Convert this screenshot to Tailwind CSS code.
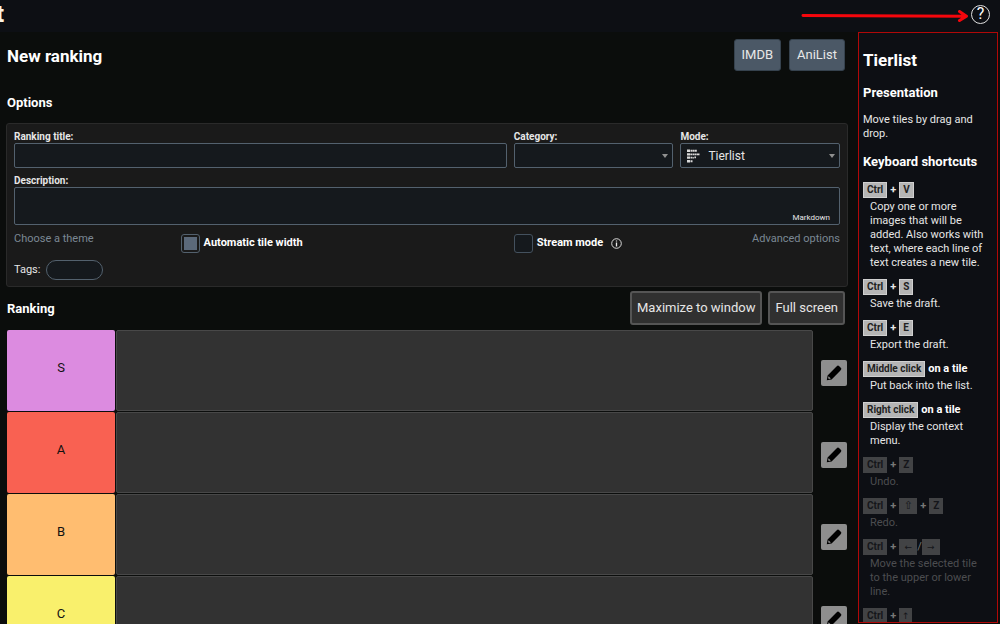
<!DOCTYPE html>
<html lang="en">
<head>
<meta charset="utf-8">
<meta name="viewport" content="width=device-width, initial-scale=1">
<title>New ranking</title>
<script src="https://cdn.jsdelivr.net/npm/@tailwindcss/browser@4"></script>
</head>
<body class="flex h-screen flex-col overflow-hidden bg-[#0b0d0c] font-[Roboto,sans-serif] text-[11px] leading-[14px] text-[#e6e6e6]">
<svg class="hidden">
  <symbol id="pencil" viewBox="0 0 16 16"><path d="M.8 15.200 L1.600 10.400 L10 2 L11.300 .8 Q12.200 .2 13 1 L15 3 Q15.700 3.800 15 4.700 L14 6 L5.600 14.400 Z"/><path d="M2.600 11.200 L4.800 13.400 L2.900 13.900 L2.100 13.100 Z" fill="#8e8e8e"/></symbol>
</svg>

<header class="flex h-8 shrink-0 items-center justify-between bg-[#0d0f14] pr-[10px]">
  <a href="#" class="-ml-1 flex h-full items-center pb-1 text-[24px] font-bold leading-7 text-[#fbf3e4]">t</a>
  <div class="flex items-center gap-[2px] pb-1">
    <svg class="mt-1 h-3 w-[168px]" viewBox="0 0 168 12" fill="none" stroke="#f5060c" stroke-width="3" stroke-linecap="round" stroke-linejoin="round"><path d="M2 5.5 L165 6.2 M158.500 1.500 L165.500 6.200 L158.500 10.500"/></svg>
    <button type="button" aria-label="Help" class="flex size-[19px] items-center justify-center rounded-full border border-[#e0e0e0] text-[16px] leading-4 text-white">?</button>
  </div>
</header>

<div class="flex min-h-0 flex-1">
  <main class="min-w-0 flex-1 overflow-hidden pl-[6px] pr-[10px]">
    <div class="flex items-start justify-between pl-px pr-[3px] pt-[7px]">
      <h1 class="pt-[7px] text-[17px] font-bold leading-5 text-white">New ranking</h1>
      <div class="flex gap-2">
        <button type="button" class="h-8 rounded-[3px] border border-[#36424e] bg-[#4b5866] px-[7px] text-[13px] text-[#e8e8e8]">IMDB</button>
        <button type="button" class="h-8 rounded-[3px] border border-[#36424e] bg-[#4b5866] px-[7px] text-[13px] text-[#e8e8e8]">AniList</button>
      </div>
    </div>

    <h2 class="mt-6 pl-px text-[13px] font-bold leading-4 text-white">Options</h2>

    <form class="mt-3 grid grid-cols-5 gap-x-[7px] rounded-[3px] border border-[#2a2a2a] bg-[#1a1a1a] px-[7px] pb-[6px] pt-[6px]">
      <div class="col-span-3">
        <label for="title" class="block h-[13px] text-[10px] font-bold">Ranking title:</label>
        <input id="title" type="text" class="block h-[25px] w-full rounded-[2px] border border-[#53616e] bg-[#15191d] px-2">
      </div>
      <div>
        <label for="category" class="block h-[13px] text-[10px] font-bold">Category:</label>
        <div class="relative">
          <select id="category" class="block h-[25px] w-full appearance-none rounded-[2px] border border-[#53616e] bg-[#15191d] px-2"><option></option></select>
          <svg class="pointer-events-none absolute right-[5px] top-[11px] h-1 w-[6px] fill-[#909090]" viewBox="0 0 6 4"><path d="M0 0H6L3 4Z"/></svg>
        </div>
      </div>
      <div>
        <label for="mode" class="block h-[13px] text-[10px] font-bold">Mode:</label>
        <div class="relative">
          <select id="mode" class="block h-[25px] w-full appearance-none rounded-[2px] border border-[#53616e] bg-[#15191d] pl-[27px] pr-4 text-[12px]"><option>Tierlist</option></select>
          <svg class="pointer-events-none absolute left-[7px] top-[6px] h-[14px] w-[13px] fill-[#dadada]" viewBox="0 0 13 14"><path d="M0 .5H3V3H0ZM3.500 .700H5.700V2.700H3.500ZM6 .700H7.700V2.700H6ZM8 .700H9.800V2.700H8ZM0 4.200H3V6.500H0ZM3.300 4.500H5.200V6.200H3.300ZM5.600 4.500H7.300V6.200H5.600ZM7.600 4.500H9.700V6.200H7.600ZM10 4.500H12.500V6.200H10ZM0 7.500H3V9.800H0ZM3.500 7.800H5.300V9.500H3.500ZM5.600 8.300H7V9.500H5.600ZM7.400 7.600H9V9.300H7.400ZM0 11H3V13.500H0ZM3.500 11.300H5.500V13.200H3.500Z"/></svg>
          <svg class="pointer-events-none absolute right-[5px] top-[11px] h-1 w-[6px] fill-[#909090]" viewBox="0 0 6 4"><path d="M0 0H6L3 4Z"/></svg>
        </div>
      </div>

      <div class="relative col-span-5 mt-[6px]">
        <label for="description" class="block h-[13px] text-[10px] font-bold">Description:</label>
        <textarea id="description" class="block h-[38px] w-full resize-none rounded-[2px] border border-[#53616e] bg-[#15191d] px-2 py-1"></textarea>
        <span class="pointer-events-none absolute bottom-0 right-[10px] text-[8px]">Markdown</span>
      </div>

      <a href="#" class="mt-[7px] text-[#7b8894]">Choose a theme</a>
      <label class="col-span-2 mt-[9px] flex h-[18px] items-center gap-1 font-bold text-white">
        <input type="checkbox" checked class="size-[19px] appearance-none rounded-[3px] border border-[#53616e] bg-[#15191d] bg-clip-content p-[2px] checked:bg-[#5b697a]">Automatic tile width</label>
      <label class="mt-[9px] flex h-[18px] items-center gap-1 font-bold text-white">
        <input type="checkbox" class="size-[19px] appearance-none rounded-[3px] border border-[#44515e] bg-[#15191d]">Stream mode
        <svg class="ml-1 mt-px size-[11px]" viewBox="0 0 11 11" fill="none" stroke="#eee"><circle cx="5.500" cy="5.500" r="4.800" stroke-width=".9"/><path d="M5.500 4.600V8.500M5.500 2.500V3.600" stroke-width="1.300"/></svg></label>
      <a href="#" class="mt-[7px] text-right text-[#7b8894]">Advanced options</a>

      <div class="col-span-5 mt-2 flex items-center gap-[6px]">
        <label for="tags">Tags:</label>
        <input id="tags" type="text" class="h-5 w-[57px] rounded-full border border-[#53616e] bg-[#15191d] px-2">
      </div>
    </form>

    <div class="mt-1 flex items-center justify-between pl-px pr-[3px]">
      <h2 class="pt-px text-[13px] font-bold leading-4 text-white">Ranking</h2>
      <div class="flex gap-[6px]">
        <button type="button" class="h-[34px] rounded-[3px] border-2 border-[#555] bg-[#303030] px-[5px] text-[13px]">Maximize to window</button>
        <button type="button" class="h-[34px] rounded-[3px] border-2 border-[#555] bg-[#303030] px-[5px] text-[13px]">Full screen</button>
      </div>
    </div>

    <div class="mt-[5px] flex flex-col gap-px pl-px pr-px text-[13px] text-[#111]">
      <div class="flex h-[81px]">
        <div class="flex w-[108px] items-center justify-center rounded-[2px] bg-[#dc8be0] pb-[6px]">S</div>
        <div class="ml-px flex-1 rounded-[2px] border border-[#484848] bg-[#323232]"></div>
        <div class="ml-2 flex items-center pt-[5px]"><button type="button" aria-label="Edit S" class="flex size-[26px] items-center justify-center rounded-[2px] bg-[#8e8e8e]"><svg class="size-4 fill-black"><use href="#pencil"/></svg></button></div>
      </div>
      <div class="flex h-[81px]">
        <div class="flex w-[108px] items-center justify-center rounded-[2px] bg-[#f96152] pb-[6px]">A</div>
        <div class="ml-px flex-1 rounded-[2px] border border-[#484848] bg-[#323232]"></div>
        <div class="ml-2 flex items-center pt-[5px]"><button type="button" aria-label="Edit A" class="flex size-[26px] items-center justify-center rounded-[2px] bg-[#8e8e8e]"><svg class="size-4 fill-black"><use href="#pencil"/></svg></button></div>
      </div>
      <div class="flex h-[81px]">
        <div class="flex w-[108px] items-center justify-center rounded-[2px] bg-[#ffbd70] pb-[6px]">B</div>
        <div class="ml-px flex-1 rounded-[2px] border border-[#484848] bg-[#323232]"></div>
        <div class="ml-2 flex items-center pt-[5px]"><button type="button" aria-label="Edit B" class="flex size-[26px] items-center justify-center rounded-[2px] bg-[#8e8e8e]"><svg class="size-4 fill-black"><use href="#pencil"/></svg></button></div>
      </div>
      <div class="flex h-[81px]">
        <div class="flex w-[108px] items-center justify-center rounded-[2px] bg-[#f9f06c] pb-[6px]">C</div>
        <div class="ml-px flex-1 rounded-[2px] border border-[#484848] bg-[#323232]"></div>
        <div class="ml-2 flex items-center pt-[5px]"><button type="button" aria-label="Edit C" class="flex size-[26px] items-center justify-center rounded-[2px] bg-[#8e8e8e]"><svg class="size-4 fill-black"><use href="#pencil"/></svg></button></div>
      </div>
    </div>
  </main>

  <aside class="mb-px mr-[2px] w-[140px] shrink-0 overflow-hidden border border-[#b00808] bg-[#0d0f14] pl-1">
    <h2 class="mt-[17px] text-[17px] font-bold leading-5 text-white">Tierlist</h2>
    <h3 class="mt-[15px] text-[13px] font-bold leading-4 text-white">Presentation</h3>
    <p class="mt-3 pr-4">Move tiles by drag and drop.</p>
    <h3 class="mt-[13px] text-[13px] font-bold leading-4 text-white">Keyboard shortcuts</h3>
    <dl class="mt-[11px] flex flex-col gap-2 whitespace-nowrap">
      <div>
        <dt class="flex h-[17px] items-center gap-[3px] font-bold"><kbd class="flex h-4 items-center border border-[#d0d0d0] bg-[#b5b5b5] px-[3px] font-[Roboto,sans-serif] text-[10px] text-[#222]">Ctrl</kbd>+<kbd class="flex h-4 items-center border border-[#d0d0d0] bg-[#b5b5b5] px-[3px] font-[Roboto,sans-serif] text-[10px] text-[#222]">V</kbd></dt>
        <dd class="pl-[7px] pt-[2px]">Copy one or more<br>images that will be<br>added. Also works with<br>text, where each line of<br>text creates a new tile.</dd>
      </div>
      <div>
        <dt class="flex h-[17px] items-center gap-[3px] font-bold"><kbd class="flex h-4 items-center border border-[#d0d0d0] bg-[#b5b5b5] px-[3px] font-[Roboto,sans-serif] text-[10px] text-[#222]">Ctrl</kbd>+<kbd class="flex h-4 items-center border border-[#d0d0d0] bg-[#b5b5b5] px-[3px] font-[Roboto,sans-serif] text-[10px] text-[#222]">S</kbd></dt>
        <dd class="pl-[7px] pt-[2px]">Save the draft.</dd>
      </div>
      <div>
        <dt class="flex h-[17px] items-center gap-[3px] font-bold"><kbd class="flex h-4 items-center border border-[#d0d0d0] bg-[#b5b5b5] px-[3px] font-[Roboto,sans-serif] text-[10px] text-[#222]">Ctrl</kbd>+<kbd class="flex h-4 items-center border border-[#d0d0d0] bg-[#b5b5b5] px-[3px] font-[Roboto,sans-serif] text-[10px] text-[#222]">E</kbd></dt>
        <dd class="pl-[7px] pt-[2px]">Export the draft.</dd>
      </div>
      <div>
        <dt class="flex h-[17px] items-center gap-[3px] font-bold text-white"><kbd class="flex h-4 items-center border border-[#d0d0d0] bg-[#b5b5b5] px-[3px] font-[Roboto,sans-serif] text-[10px] text-[#222]">Middle click</kbd>on a tile</dt>
        <dd class="pl-[7px] pt-[2px]">Put back into the list.</dd>
      </div>
      <div>
        <dt class="flex h-[17px] items-center gap-[3px] font-bold text-white"><kbd class="flex h-4 items-center border border-[#d0d0d0] bg-[#b5b5b5] px-[3px] font-[Roboto,sans-serif] text-[10px] text-[#222]">Right click</kbd>on a tile</dt>
        <dd class="pl-[7px] pt-[2px]">Display the context<br>menu.</dd>
      </div>
      <div class="text-[#4c4d50]">
        <dt class="flex h-[17px] items-center gap-[3px] font-bold"><kbd class="flex h-4 items-center bg-[#424345] px-1 font-[Roboto,sans-serif] text-[10px] text-[#15161a]">Ctrl</kbd><span class="text-[#777]">+</span><kbd class="flex h-4 items-center bg-[#424345] px-1 font-[Roboto,sans-serif] text-[10px] text-[#15161a]">Z</kbd></dt>
        <dd class="pl-[7px] pt-[2px]">Undo.</dd>
      </div>
      <div class="text-[#4c4d50]">
        <dt class="flex h-[17px] items-center gap-[3px] font-bold"><kbd class="flex h-4 items-center bg-[#424345] px-1 font-[Roboto,sans-serif] text-[10px] text-[#15161a]">Ctrl</kbd><span class="text-[#777]">+</span><kbd class="flex h-4 w-[18px] items-center justify-center bg-[#424345] font-['DejaVu_Sans',sans-serif] text-[11px] font-normal text-[#15161a]">⇧</kbd><span class="text-[#777]">+</span><kbd class="flex h-4 items-center bg-[#424345] px-1 font-[Roboto,sans-serif] text-[10px] text-[#15161a]">Z</kbd></dt>
        <dd class="pl-[7px] pt-[2px]">Redo.</dd>
      </div>
      <div class="text-[#4c4d50]">
        <dt class="flex h-[17px] items-center gap-[3px] font-bold"><kbd class="flex h-4 items-center bg-[#424345] px-1 font-[Roboto,sans-serif] text-[10px] text-[#15161a]">Ctrl</kbd><span class="text-[#777]">+</span><span class="flex items-center font-normal text-[#777]"><kbd class="flex h-4 w-[18px] items-center justify-center bg-[#424345] font-['DejaVu_Sans',sans-serif] text-[9px] text-[#15161a]">←</kbd>/<kbd class="flex h-4 w-[18px] items-center justify-center bg-[#424345] font-['DejaVu_Sans',sans-serif] text-[9px] text-[#15161a]">→</kbd></span></dt>
        <dd class="pl-[7px] pt-[2px]">Move the selected tile<br>to the upper or lower<br>line.</dd>
      </div>
      <div class="text-[#4c4d50]">
        <dt class="flex h-[17px] items-center gap-[3px] font-bold"><kbd class="flex h-4 items-center bg-[#424345] px-1 font-[Roboto,sans-serif] text-[10px] text-[#15161a]">Ctrl</kbd><span class="text-[#777]">+</span><kbd class="flex h-4 w-[13px] items-center justify-center bg-[#424345] font-['DejaVu_Sans',sans-serif] text-[9px] font-normal text-[#15161a]">↑</kbd></dt>
      </div>
    </dl>
  </aside>
</div>
</body>
</html>
